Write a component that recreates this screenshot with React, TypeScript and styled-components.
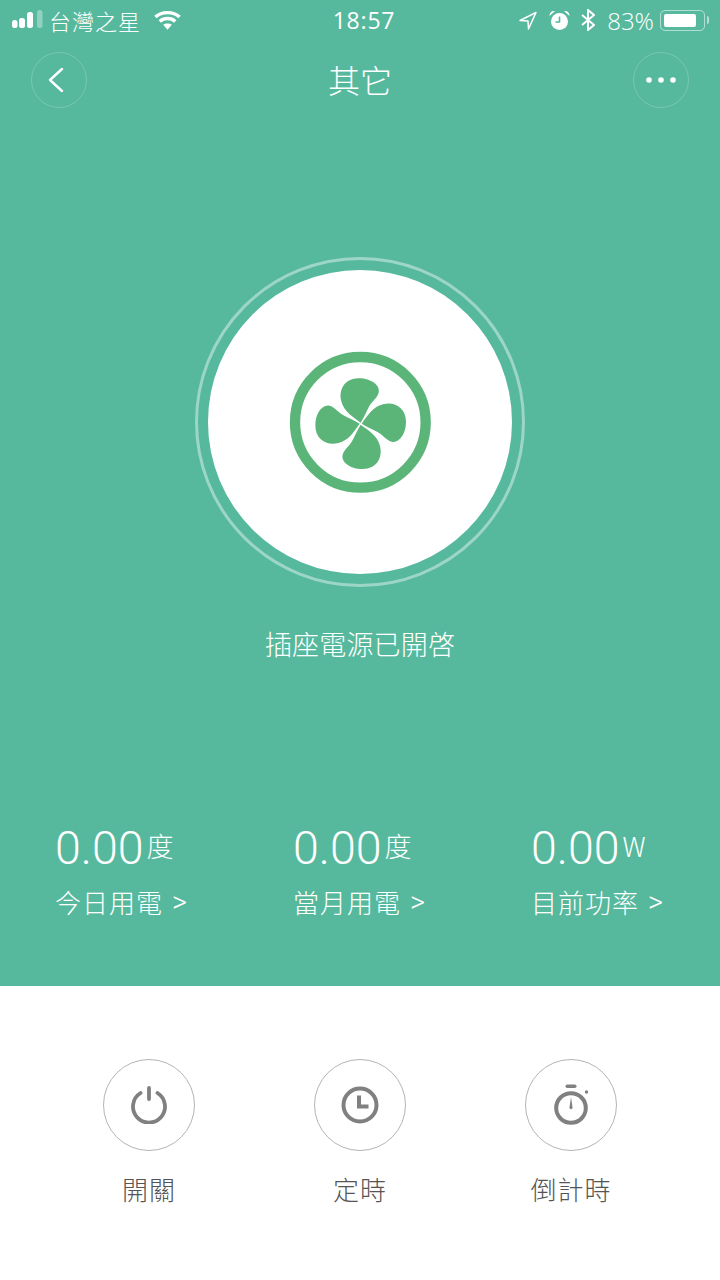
import * as React from 'react';
import styled, { createGlobalStyle } from 'styled-components';

const GlobalStyle = createGlobalStyle`
  html, body {
    margin: 0;
    padding: 0;
    background: #fff;
  }
  * {
    box-sizing: border-box;
  }
`;

const CJK = `"Noto Sans CJK TC", "Noto Sans CJK SC", sans-serif`;

const Page = styled.div`
  width: 720px;
  height: 1280px;
  display: flex;
  flex-direction: column;
  overflow: hidden;
  font-family: ${CJK};
  font-weight: 300;
`;

const GreenPanel = styled.div`
  height: 986px;
  background: #56b99d;
  color: #fff;
  display: flex;
  flex-direction: column;
`;

const StatusBar = styled.div`
  height: 40px;
  padding: 0 12px;
  display: grid;
  grid-template-columns: 1fr auto 1fr;
  align-items: center;
`;

const StatusLeft = styled.div`
  display: flex;
  align-items: center;
`;

const Carrier = styled.span`
  margin-left: 6px;
  font-size: 22px;
  line-height: 40px;
  letter-spacing: 1px;
`;

const Clock = styled.span`
  font-family: 'Open Sans', sans-serif;
  font-weight: 500;
  font-size: 23px;
  line-height: 40px;
  letter-spacing: 0.8px;
  margin-left: 8px;
`;

const StatusRight = styled.div`
  display: flex;
  align-items: center;
  justify-content: flex-end;
`;

const BatteryText = styled.span`
  font-family: 'Open Sans', sans-serif;
  font-weight: 300;
  font-size: 24px;
  margin-left: 12px;
`;

const Battery = styled.div`
  position: relative;
  width: 45px;
  height: 21px;
  margin: 0 3px 0 6px;
  padding: 3px;
  border: 1.5px solid rgba(255, 255, 255, 0.55);
  border-radius: 5px;

  &::before {
    content: '';
    display: block;
    width: 32px;
    height: 100%;
    background: #fff;
    border-radius: 2px;
  }

  &::after {
    content: '';
    position: absolute;
    right: -5px;
    top: 5px;
    width: 2px;
    height: 8px;
    border-radius: 0 2px 2px 0;
    background: rgba(255, 255, 255, 0.55);
  }
`;

const NavBar = styled.div`
  margin-top: 12px;
  padding: 0 31px;
  display: flex;
  align-items: center;
  justify-content: space-between;
`;

const NavButton = styled.div`
  width: 56px;
  height: 56px;
  border: 1px solid rgba(255, 255, 255, 0.2);
  border-radius: 50%;
  display: flex;
  align-items: center;
  justify-content: center;
`;

const Title = styled.div`
  font-size: 32px;
  line-height: 54px;
  padding-bottom: 2px;
`;

const Hero = styled.div`
  margin-top: 149px;
  display: flex;
  flex-direction: column;
  align-items: center;
`;

const OuterRing = styled.div`
  width: 330px;
  height: 330px;
  border: 3px solid rgba(255, 255, 255, 0.42);
  border-radius: 50%;
  display: flex;
  align-items: center;
  justify-content: center;
`;

const Disc = styled.div`
  width: 304px;
  height: 304px;
  background: #fff;
  border-radius: 50%;
  display: flex;
  align-items: center;
  justify-content: center;
`;

const PowerStatus = styled.div`
  margin-top: 37px;
  font-size: 27px;
  line-height: 40px;
  letter-spacing: 0.2px;
`;

const Stats = styled.div`
  margin-top: 155px;
  padding-left: 55px;
  display: grid;
  grid-template-columns: repeat(3, 238px);
`;

const Stat = styled.div`
  display: flex;
  flex-direction: column;
`;

const ValueRow = styled.div`
  display: flex;
  align-items: flex-start;
  height: 54px;
`;

const Value = styled.span`
  font-family: Roboto, sans-serif;
  font-weight: 300;
  font-size: 46.5px;
  line-height: 58px;
`;

const Unit = styled.span`
  margin-left: 3px;
  font-size: 27px;
  line-height: 54px;
`;

const StatLabel = styled.div`
  margin-top: 11px;
  font-size: 26px;
  line-height: 36px;
  letter-spacing: 1px;
  white-space: nowrap;
  display: flex;
  align-items: center;
`;

const Chevron = styled.span`
  margin-left: 9px;
  font-family: Roboto, sans-serif;
  font-size: 29px;
`;

const Controls = styled.div`
  flex: 1;
  background: #fff;
  padding-top: 73px;
  display: grid;
  grid-template-columns: repeat(3, 211px);
  justify-content: center;
`;

const Control = styled.div`
  display: flex;
  flex-direction: column;
  align-items: center;
`;

const ControlCircle = styled.div`
  width: 92px;
  height: 92px;
  border: 1px solid #b4b4b4;
  border-radius: 50%;
  display: flex;
  align-items: center;
  justify-content: center;
`;

const ControlLabel = styled.div`
  margin-top: 18px;
  color: #555;
  font-size: 26px;
  line-height: 40px;
  letter-spacing: 1px;
`;

const Glyph = styled.svg<{ $left?: number; $right?: number }>`
  flex: none;
  margin-left: ${p => p.$left ?? 0}px;
  margin-right: ${p => p.$right ?? 0}px;
`;

const SignalIcon = () => (
  <Glyph width="31" height="20" viewBox="0 0 31 20">
    <rect x="0" y="10" width="5.5" height="8" rx="2.5" fill="#fff" />
    <rect x="7" y="8" width="6" height="10" rx="2.5" fill="#fff" />
    <rect x="15" y="2" width="6" height="16" rx="2.5" fill="#fff" />
    <rect x="25" y="0" width="5.5" height="18" rx="2.5" fill="#fff" opacity="0.35" />
  </Glyph>
);

const WifiIcon = () => (
  <Glyph width="27" height="20" viewBox="0 0 28 20" $left={13}>
    <path d="M1.5 7 C8 0.8 20 0.8 26.5 7" fill="none" stroke="#fff" strokeWidth="3.6" />
    <path d="M6 11.5 C10.5 7.5 17.5 7.5 22 11.5" fill="none" stroke="#fff" strokeWidth="3.6" />
    <path d="M9.5 15 C12 13 16 13 18.5 15 L14 20 Z" fill="#fff" />
  </Glyph>
);

const LocationIcon = () => (
  <Glyph width="18" height="19" viewBox="0 0 18 19">
    <path d="M1 9.5 L17 1.5 L9.5 18 L9 10 Z" fill="none" stroke="#fff" strokeWidth="1.5" strokeLinejoin="round" />
  </Glyph>
);

const AlarmIcon = () => (
  <Glyph width="21" height="21" viewBox="0 0 21 21" $left={12}>
    <circle cx="10.5" cy="11.5" r="8.5" fill="#fff" />
    <path d="M10.5 6.5 V12 H6.5" fill="none" stroke="#56b99d" strokeWidth="1.6" />
    <path d="M0.5 6 C0.5 2 3 0.5 6 1 Z M20.5 6 C20.5 2 18 0.5 15 1 Z" fill="#fff" />
  </Glyph>
);

const BluetoothIcon = () => (
  <Glyph width="14" height="22" viewBox="0 0 14 22" $left={11}>
    <path d="M1 6 L13 16 L7 21 V1 L13 6 L1 16" fill="none" stroke="#fff" strokeWidth="2" />
  </Glyph>
);

const BackIcon = () => (
  <Glyph width="16" height="26" viewBox="0 0 16 26" $right={6}>
    <path d="M14 2 L2 13 L14 24" fill="none" stroke="#fff" strokeWidth="2.4" strokeLinecap="round" strokeLinejoin="round" />
  </Glyph>
);

const MoreIcon = () => (
  <Glyph width="32" height="8" viewBox="0 0 32 8">
    <circle cx="4" cy="4" r="2.8" fill="#fff" />
    <circle cx="16" cy="4" r="2.8" fill="#fff" />
    <circle cx="28" cy="4" r="2.8" fill="#fff" />
  </Glyph>
);

const BLADE =
  'M272 272 C248 254 222 240 214 208 C205 172 225 140 265 139 C302 138 332 160 326 182 C321 200 304 208 296 226 C288 242 282 256 272 272 Z';

const FanIcon = () => (
  <svg width="180" height="180" viewBox="0 0 540 540">
    <circle cx="271" cy="271" r="196" fill="none" stroke="#5bb578" strokeWidth="31" />
    {[0, 90, 180, 270].map(angle => (
      <path key={angle} d={BLADE} fill="#5bb578" transform={`rotate(${angle} 272 275)`} />
    ))}
  </svg>
);

const PowerIcon = () => (
  <Glyph width="38" height="38" viewBox="0 0 38 38">
    <path d="M10.5 7 A16 16 0 1 0 27.5 7" fill="none" stroke="#808080" strokeWidth="3.8" strokeLinecap="round" />
    <path d="M19 2 V13" fill="none" stroke="#808080" strokeWidth="3.8" strokeLinecap="round" />
  </Glyph>
);

const ClockIcon = () => (
  <Glyph width="38" height="38" viewBox="0 0 38 38">
    <circle cx="19" cy="19" r="16.5" fill="none" stroke="#808080" strokeWidth="4" />
    <path d="M18 9.5 V20.5 H27.5" fill="none" stroke="#808080" strokeWidth="4" />
  </Glyph>
);

const TimerIcon = () => (
  <Glyph width="38" height="42" viewBox="0 0 38 42">
    <rect x="13.5" y="0.5" width="11" height="3.5" rx="1.7" fill="#808080" />
    <circle cx="19" cy="24" r="14.8" fill="none" stroke="#808080" strokeWidth="4" />
    <path d="M17.4 24 L19 13 L20.6 24 A1.7 1.7 0 0 1 17.4 24 Z" fill="#808080" />
    <circle cx="34.5" cy="8" r="1.7" fill="#808080" />
  </Glyph>
);

const stats = [
  { value: '0.00', unit: '度', label: '今日用電' },
  { value: '0.00', unit: '度', label: '當月用電' },
  { value: '0.00', unit: 'W', label: '目前功率' },
];

const controls = [
  { label: '開關', icon: <PowerIcon /> },
  { label: '定時', icon: <ClockIcon /> },
  { label: '倒計時', icon: <TimerIcon /> },
];

const App: React.FunctionComponent = () => (
  <Page>
    <GlobalStyle />
    <GreenPanel>
      <StatusBar>
        <StatusLeft>
          <SignalIcon />
          <Carrier>台灣之星</Carrier>
          <WifiIcon />
        </StatusLeft>
        <Clock>18:57</Clock>
        <StatusRight>
          <LocationIcon />
          <AlarmIcon />
          <BluetoothIcon />
          <BatteryText>83%</BatteryText>
          <Battery />
        </StatusRight>
      </StatusBar>
      <NavBar>
        <NavButton>
          <BackIcon />
        </NavButton>
        <Title>其它</Title>
        <NavButton>
          <MoreIcon />
        </NavButton>
      </NavBar>
      <Hero>
        <OuterRing>
          <Disc>
            <FanIcon />
          </Disc>
        </OuterRing>
        <PowerStatus>插座電源已開啓</PowerStatus>
      </Hero>
      <Stats>
        {stats.map(stat => (
          <Stat key={stat.label}>
            <ValueRow>
              <Value>{stat.value}</Value>
              <Unit>{stat.unit}</Unit>
            </ValueRow>
            <StatLabel>
              {stat.label}
              <Chevron>&gt;</Chevron>
            </StatLabel>
          </Stat>
        ))}
      </Stats>
    </GreenPanel>
    <Controls>
      {controls.map(control => (
        <Control key={control.label}>
          <ControlCircle>{control.icon}</ControlCircle>
          <ControlLabel>{control.label}</ControlLabel>
        </Control>
      ))}
    </Controls>
  </Page>
);

export default App;
